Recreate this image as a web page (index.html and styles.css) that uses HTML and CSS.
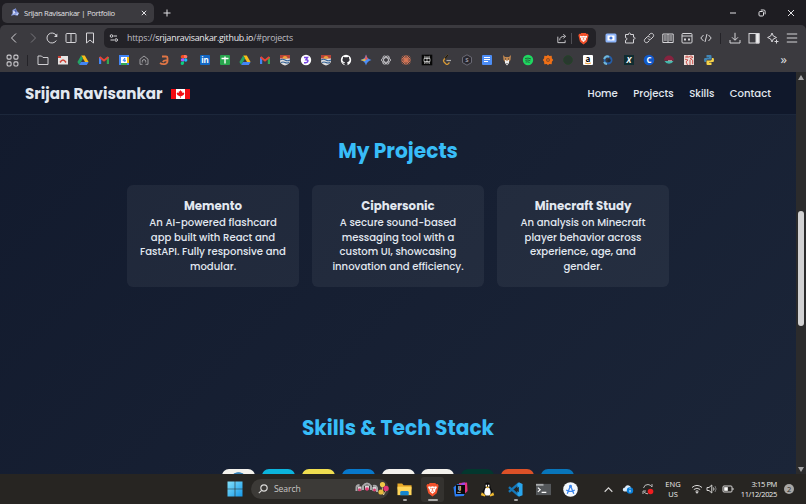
FILE: index.html
```html
<!DOCTYPE html>
<html lang="en">

<head>
  <title>Srijan Ravisankar | Portfolio</title>
  <meta charset="UTF-8">
  <meta name="viewport" content="width=device-width, initial-scale=1.0">
  <link rel="stylesheet" href="styles.css">
</head>

<body>
  <!-- icons used more than once -->
  <svg class="defs">
    <symbol id="drive" viewBox="0 0 12 12">
      <path fill="#f9bd18" d="M4.2 1.5h3.6L11.6 8H8z" />
      <path fill="#24a464" d="M4.2 1.5 6 4.6 2.2 11 .4 8z" />
      <path fill="#4285f4" d="M4 8h7.6l-1.8 3H2.2z" />
    </symbol>
    <symbol id="gmail" viewBox="0 0 12 12">
      <path fill="#4285f4" d="M1 3h2.2v7H1z" />
      <path fill="#34a853" d="M8.8 3H11v7H8.8z" />
      <path fill="none" stroke="#e94335" stroke-width="2" d="M1.6 3 6 6.5 10.4 3" />
    </symbol>
    <symbol id="ubc" viewBox="0 0 12 12">
      <path fill="#ddd" d="M1 1h10v6c0 2-2 3.5-5 4.5C3 10.5 1 9 1 7z" />
      <path fill="#b74438" d="M1 1h10v3.5H1z" />
      <path fill="#eda33b" d="M3.5 4.5a2.5 2.5 0 0 1 5 0z" />
      <path fill="none" stroke="#315f94" stroke-width="1.2" d="M1 6q2.5-1.5 5 0t5 0M2 8.5q2-1 4 0t4 0" />
    </symbol>
    <symbol id="brave" viewBox="0 0 14 16">
      <path fill="#f2502a" d="M4 1h6l1 1.3 1.5-.2L13.5 4 13 6l-1.5 6L7 15.5 2.5 12 1 6 .5 4l1-1.9 1.5.2z" />
      <path fill="#fff" d="m3 4.500 2.200.6L7 4.500l1.800.6 2.200-.6.7 1.300-1.800 2.600.2 1.500L7 12.500 3.900 9.900l.2-1.500-1.800-2.600z" />
      <path fill="none" stroke="#f2502a" stroke-width=".8" d="m4.500 6.500 1.500.6M9.500 6.500 8 7.100M7 6.500v2.500M5.500 10 7 9.500l1.500.5" />
    </symbol>
  </svg>

  <div class="tabbar">
    <div class="tab">
      <svg class="favicon" viewBox="0 0 12 12">
        <path fill="#8da0df" d="m3 3 4-2 1 3 3 3-2 3-4-1-4 1 2-3z" />
        <path fill="#e7ebff" d="m4 4 3 1-3 3zM7 8l3-1-1 2z" />
        <path fill="#4d5fb4" d="m7 2 1 3-1 1-2-2z" />
      </svg>
      <span class="tab-title">Srijan Ravisankar | Portfolio</span>
      <svg class="close" viewBox="0 0 6 6"><path d="m.8.8 4.400 4.400m0-4.400L.8 5.200" /></svg>
    </div>
    <svg class="plus" viewBox="0 0 8 8"><path d="M4 .5v7M.5 4h7" /></svg>
    <div class="window-buttons">
      <svg viewBox="0 0 8 8"><path d="M1 4h6" /></svg>
      <svg viewBox="0 0 8 8"><rect x="1" y="2.5" width="4.5" height="4.5" rx="1" /><path d="M2.800 1h3a1.300 1.300 0 0 1 1.300 1.300v3" /></svg>
      <svg viewBox="0 0 8 8"><path d="m1 1 6 6m0-6L1 7" /></svg>
    </div>
  </div>

  <div class="toolbar">
    <div class="nav-buttons">
      <svg viewBox="0 0 12 12"><path d="M8 1.500 3.500 6 8 10.500" /></svg>
      <svg class="dim" viewBox="0 0 12 12"><path d="M4 1.500 8.500 6 4 10.500" /></svg>
      <svg viewBox="0 0 12 12"><path d="M10.300 8.500a5 5 0 1 1 0-5" /><path fill="#d5d4d8" d="M11.300 1.500v3.500H8z" stroke="none" /></svg>
      <svg viewBox="0 0 12 12"><rect x="1" y="1.5" width="10" height="9" rx="1" /><path d="M6 1.500v9" /></svg>
      <svg viewBox="0 0 12 12"><path d="M2.500 1h7v10L6 8 2.500 11z" /></svg>
    </div>
    <div class="address">
      <svg class="site" viewBox="0 0 10 10"><circle cx="2.5" cy="3" r="1.3" /><path d="M4.500 3H8M1.500 7H5" /><circle cx="7.2" cy="7" r="1.3" /></svg>
      <span class="url">https://<b>srijanravisankar.github.io</b>/#projects</span>
      <svg class="share" viewBox="0 0 12 12"><path d="M2 4v6.500h8V8M4 8c0-3 2-4.500 5.500-4.500M8 1.500l2.500 2L8 6" /></svg>
      <i class="line"></i>
      <svg class="shield"><use href="#brave" /></svg>
    </div>
    <div class="extensions">
      <svg viewBox="0 0 12 12"><rect x=".5" y="1.5" width="11" height="9" rx="1.5" fill="#8eb5fa" stroke="none" /><rect x="2.5" y="3.5" width="7" height="5" fill="#fff" stroke="none" /><circle cx="6" cy="6" r="1.6" fill="#3f74d8" stroke="none" /></svg>
      <svg viewBox="0 0 12 12"><path d="M1.500 2.500h3c-.4-2 2.400-2 2 0h3v2.700c2-.4 2 2.400 0 2V11h-8V8.300c1.800.2 1.800-3 0-2.600z" /></svg>
      <svg viewBox="0 0 12 12"><path d="m5.500 3.500 1.500-1.500c2-2 5 1 3 3L8 7C7 8 5.500 7.700 5 6.500M6.500 8.500 5 10c-2 2-5-1-3-3l2-2c1-1 2.500-.7 3 .5" /></svg>
      <svg viewBox="0 0 12 12"><path d="M6 2v9M6 2H.8v8.500H6M6 2h5.200v8.500H6M2 4h2.800M2 6h2.800M2 8h2.800M7.200 4H10M7.200 6H10M7.200 8H10" /></svg>
      <svg viewBox="0 0 12 12"><rect x="1" y="1.5" width="10" height="9.5" rx="1" /><path d="M1 4h10" /><path stroke-width="2" d="M3 7.500h2m2 0h2" /></svg>
      <svg viewBox="0 0 12 12"><path d="M3.500 3 .8 6l2.700 3M8.500 3l2.700 3-2.700 3M7 2 5 10" /></svg>
    </div>
    <i class="line dark"></i>
    <div class="extensions tools">
      <svg viewBox="0 0 12 12"><path d="M6 .8V8M3 5.300 6 8.300l3-3M1 8v3h10V8" /></svg>
      <svg viewBox="0 0 12 12"><rect x="1" y="1.5" width="10" height="9.5" /><path fill="#eee" d="M8 1.500h3V11H8z" /></svg>
      <svg viewBox="0 0 12 12"><path d="m5 1 1.300 3L9.500 5.500 6.300 7 5 10 3.700 7 .6 5.500 3.700 4z M9.500 7.500v4M7.500 9.500h4" /></svg>
      <svg viewBox="0 0 12 12"><path d="M.8 2h10.400M.8 6h10.400M.8 10h10.400" /></svg>
    </div>
  </div>

  <div class="bookmarks">
    <svg class="apps" viewBox="0 0 12 12"><rect x="1" y="1" width="3.7" height="3.7" rx="1" /><rect x="7.3" y="1" width="3.7" height="3.7" rx="1" /><rect x="1" y="7.3" width="3.7" height="3.7" rx="1" /><rect x="7.3" y="7.3" width="3.7" height="3.7" rx="1" /></svg>
    <i class="line dark"></i>
    <div class="marks">
      <svg viewBox="0 0 12 12"><path fill="none" stroke="#cfced2" d="M1 2h3.500L6 3.500h5v7H1z" /></svg>
      <svg viewBox="0 0 12 12"><path fill="#e6e3e2" d="M1 2h10v8.500H1z" /><path fill="#ce4238" d="M1 2h3v2H1z" /><path fill="none" stroke="#ce4238" stroke-width="1.5" d="M3 8.500q3-5 6 0" /></svg>
      <svg><use href="#drive" /></svg>
      <svg><use href="#gmail" /></svg>
      <svg viewBox="0 0 12 12"><path fill="#4285f4" d="M1 1h10v10H1z" /><path fill="#fbbc04" d="M9 3h2v6H9z" /><path fill="#34a853" d="M3 9h6v2H3z" /><path fill="#fff" d="M3 3h6v6H3z" /><path stroke="#4285f4" fill="none" d="M6.800 8V4L5 6.700h3" /></svg>
      <svg viewBox="0 0 12 12"><path fill="none" stroke="#a9a8ac" stroke-width=".9" d="M4.500 10.300H2V5.200L6 2l4 3.200v5.100H7.500M4.300 8.500V7.300a1.700 1.700 0 0 1 3.400 0v1.200" /></svg>
      <svg viewBox="0 0 12 12"><path fill="none" stroke="#df7545" stroke-width="1.8" d="M4 2.500h4q1.500 0 1.500 1.500v3C9.500 10.500 4.500 11 2 9M9 6.500Q6 6 4.800 8" /></svg>
      <svg viewBox="0 0 12 12"><path fill="#f24e1e" d="M6 1v3.300H4.400A1.600 1.600 0 0 1 4.400 1z" /><path fill="#ff7262" d="M6 1h1.700a1.600 1.600 0 0 1 0 3.300H6z" /><path fill="#a259ff" d="M6 4.300v3.300H4.400a1.600 1.600 0 0 1 0-3.300z" /><circle cx="7.7" cy="6" r="1.7" fill="#1abcfe" /><path fill="#0acf83" d="M6 7.600v2a1.700 1.700 0 1 1-1.600-2z" /></svg>
      <svg class="text-icon" viewBox="0 0 12 12"><rect x="1" y="1" width="10" height="10" rx="1" fill="#1267c4" /><text x="6" y="9" fill="#fff">in</text></svg>
      <svg viewBox="0 0 12 12"><rect x="1" y="1" width="10" height="10" rx="1" fill="#28a64d" /><path stroke="#fff" stroke-width="1.4" d="M2.500 4.500h7M6 2.500v7" /></svg>
      <svg><use href="#drive" /></svg>
      <svg><use href="#gmail" /></svg>
      <svg><use href="#ubc" /></svg>
      <svg viewBox="0 0 12 12"><circle cx="6" cy="6" r="5.2" fill="#fff" /><path fill="none" stroke="#7544e1" stroke-width="1.5" d="M4 3.500h3.500L6 5.700c3 0 2.200 3-.2 3H4" /></svg>
      <svg><use href="#ubc" /></svg>
      <svg viewBox="0 0 12 12"><circle cx="6" cy="6" r="5.2" fill="#fff" /><path fill="#333238" d="M4.500 11.500V9.700C3.300 9.800 2.900 9 2.400 8.500c1 0 1 .8 2.200.5l.4-.8C2 7.800 2.200 5 3 4.200V2.700l1.700.6h2.600L9 2.700v1.500c.9 1 1 3.600-2 4l.5.900v2.400z" /></svg>
      <svg viewBox="0 0 12 12"><path fill="#4c8df6" d="M6 .5Q7 5 11.500 6 7 7 6 11.500 5 7 .5 6 5 5 6 .5" /><path fill="#ee5951" d="M6 .5Q6.800 4 8 5L6 6 4.500 5Q5.700 4 6 .5" /><path fill="#e9bd39" d="M.5 6 4.500 5 6 6 4.500 7.200z" /></svg>
      <svg viewBox="0 0 12 12"><g fill="none" stroke="#c4c3c7" stroke-width=".9"><ellipse cx="6" cy="6" rx="4.5" ry="2.3" /><ellipse cx="6" cy="6" rx="4.5" ry="2.3" transform="rotate(60 6 6)" /><ellipse cx="6" cy="6" rx="4.5" ry="2.3" transform="rotate(120 6 6)" /></g></svg>
      <svg viewBox="0 0 12 12"><path stroke="#d97757" d="M6 1v10M1 6h10M2.400 2.400l7.200 7.200m0-7.200L2.400 9.600M4 1.500l4 9M8 1.500l-4 9M1.500 4l9 4M1.500 8l9-4" /></svg>
      <svg viewBox="0 0 12 12"><path fill="#070707" d="M.7.7h10.600v10.600H.7z" /><path fill="none" stroke="#ddd" stroke-width=".7" d="M6 2v8M3 4.500h6v3H3zM3.700 2.300 6 4.500l2.300-2.200v2.200M3.700 2.300v2.200M3.700 9.700 6 7.200l2.300 2.500V7.500M3.700 9.700V7.500" /></svg>
      <svg viewBox="0 0 12 12"><path fill="none" stroke="#d89a36" stroke-width="1.3" d="M7 1 3 5.500c-.8 1-.8 1.700 0 2.500l2 2q1 .8 2 0l1.500-1.500" /><path stroke="#161616" stroke-width="1.3" d="M7 1 4 4.500" /><path stroke="#aaa" stroke-width="1.2" d="M5.500 6.500H10" /></svg>
      <svg class="text-icon" viewBox="0 0 12 12"><path fill="#29282f" stroke="#7b7a86" stroke-width=".8" d="m6 .8 4.500 2.600v5.200L6 11.200 1.500 8.600V3.400z" /><text class="small" x="6" y="8" fill="#9998a4">S</text></svg>
      <svg viewBox="0 0 12 12"><rect x="1" y="1" width="10" height="10" rx="1" fill="#4c8df6" /><path stroke="#fff" d="M3 3.500h6M3 5.500h6M3 7.500h4" /></svg>
      <svg viewBox="0 0 12 12"><path fill="#bf8650" d="m2 1 2 2h4l2-2-.5 5L8 8H4L2.500 6z" /><path fill="#eee" d="M4 5.500 6 7l2-1.500V9l-2 2.500L4 9z" /><path stroke="#393433" d="M4 5h1m2 0h1M5.500 9.500h1" /></svg>
      <svg viewBox="0 0 12 12"><circle cx="6" cy="6" r="5.2" fill="#1ed760" /><path fill="none" stroke="#25653d" d="M3 4.500q3-1 6 .4M3.300 6.300q2.700-.8 5 .4M3.600 8q2-.6 4 .4" /></svg>
      <svg viewBox="0 0 12 12"><path fill="#ef7017" d="m6 .8 1.200 1.300L9.700 1.800l.2 2.400L11.200 6 9.900 7.800l-.2 2.400-2.500-.3L6 11.200 4.800 9.900l-2.500.3-.2-2.400L.8 6l1.300-1.800.2-2.400 2.500.3z" /><circle cx="6" cy="6" r="1.6" fill="#c8641f" stroke="#8a4a22" stroke-width=".8" /></svg>
      <svg viewBox="0 0 12 12"><circle cx="6" cy="6" r="4.3" fill="#29382f" stroke="#244428" /></svg>
      <svg class="text-icon" viewBox="0 0 12 12"><rect x="1" y="1" width="10" height="10" rx="1" fill="#fff" /><text x="6" y="8.3">a</text><path fill="none" stroke="#f39b32" d="M3 9q3 1.500 6 0" /></svg>
      <svg viewBox="0 0 12 12"><circle cx="6" cy="6" r="3.5" fill="none" stroke="#245eaa" stroke-width="2" /><path fill="none" stroke="#70b7d9" stroke-width="2" d="M2 5q2-4 5-2M2 8q1 2 3 2" /><circle cx="7" cy="6.5" r="1.6" fill="#222d39" /></svg>
      <svg class="text-icon" viewBox="0 0 12 12"><path fill="#112d31" d="M1 1h10v10H1z" /><text x="6" y="9" fill="#fff" font-style="italic">X</text></svg>
      <svg class="text-icon" viewBox="0 0 12 12"><circle cx="6" cy="6" r="5.3" fill="#1259ca" /><text x="6" y="9" fill="#fff">C</text></svg>
      <svg viewBox="0 0 12 12"><path fill="#86233f" d="M1 6.500a5 5 0 0 1 10 0z" /><path fill="#43b7ab" d="M1.500 7h9a5 5 0 0 1-9 0" /><path stroke="#e8d5d2" stroke-width=".7" d="M5 6.700h4" /></svg>
      <svg viewBox="0 0 12 12"><path fill="#eadedb" d="M1 1h10v10H1z" /><path fill="none" stroke="#ca433d" stroke-width=".9" d="M2 3h4l2-1.200 2 1.500-3 1.200 2.700 1.700v4M2 5.200l3 .8-2 1.800L4.500 11M7 6v5M4 1.500v2" /></svg>
      <svg viewBox="0 0 12 12"><path fill="#4186b6" d="M3.500 1h4q1 0 1 1v3.500h-4Q3 5.500 3 8H1.500Q.3 5.500 1.500 4H6v-.6H3.500z" /><path fill="#f7d348" d="M8.500 11h-4q-1 0-1-1V6.500h4Q9 6.500 9 4h1.500q1.200 2.500 0 4H6v.6h2.500z" /></svg>
    </div>
    <span class="more">»</span>
  </div>

  <div class="viewport">
    <div class="page">
      <header>
        <h1>Srijan Ravisankar</h1>
        <svg class="flag" viewBox="0 0 19 10"><path fill="#fff" d="M0 0h19v10H0z" /><path fill="#f20c13" d="M0 0h5v10H0zM14 0h5v10h-5zM9.500 1l.9 1.500.9-.3-.3 1.700 1.300-.7.4.9.7.2-.8 1.700-2.300 1.300h-.5V9h-.6V7.300h-.5L6.400 6l-.8-1.700.7-.2.4-.9 1.300.7-.3-1.700.9.3z" /></svg>
        <nav>
          <a>Home</a>
          <a>Projects</a>
          <a>Skills</a>
          <a>Contact</a>
        </nav>
      </header>
      <section class="projects">
        <h2>My Projects</h2>
        <div class="cards">
          <div class="card">
            <h3>Memento</h3>
            <p>An AI-powered flashcard<br>app built with React and<br>FastAPI. Fully responsive and<br>modular.</p>
          </div>
          <div class="card">
            <h3>Ciphersonic</h3>
            <p>A secure sound-based<br>messaging tool with a<br>custom UI, showcasing<br>innovation and efficiency.</p>
          </div>
          <div class="card">
            <h3>Minecraft Study</h3>
            <p>An analysis on Minecraft<br>player behavior across<br>experience, age, and<br>gender.</p>
          </div>
        </div>
      </section>
      <section class="skills">
        <h2>Skills &amp; Tech Stack</h2>
        <div class="stack">
          <div class="tile white java"></div>
          <div class="tile cyan"></div>
          <div class="tile yellow"></div>
          <div class="tile blue"></div>
          <div class="tile white"></div>
          <div class="tile white"></div>
          <div class="tile green"></div>
          <div class="tile orange"></div>
          <div class="tile sky"></div>
        </div>
      </section>
    </div>
    <div class="scrollbar">
      <i class="up"></i>
      <i class="thumb"></i>
      <i class="down"></i>
    </div>
  </div>

  <div class="taskbar">
    <svg class="windows" viewBox="0 0 16 16"><defs><linearGradient id="win" x2="1" y2="1"><stop stop-color="#83e1fb" /><stop offset="1" stop-color="#1598e8" /></linearGradient></defs><path fill="url(#win)" d="M.5.5h7.200v7.200H.5zM8.300.5h7.200v7.200H8.300zM.5 8.300h7.200v7.200H.5zM8.300 8.300h7.200v7.200H8.300z" /></svg>
    <div class="search">
      <svg class="glass" viewBox="0 0 10 10"><circle cx="6" cy="4" r="3.2" /><path d="M3.700 6.300.8 9.200" /></svg>
      <span>Search</span>
      <svg class="party" viewBox="0 0 34 16">
        <path fill="none" stroke="#a8a8aa" stroke-width="2" d="M1.500 10V6.500q0-2.500 3-2.500M8 9V5q4-5 8 0v4M18 5q3-1 4 2v4" />
        <path fill="#d8d5d7" d="M3 5.500h3.500v4H3zM10 4.500h4v4h-4zM17.500 6H21v4h-3.500z" />
        <circle cx="4.5" cy="8.7" r="1.5" fill="#d83c6f" /><circle cx="12" cy="8" r="1.8" fill="#e83b76" /><circle cx="19.5" cy="9" r="1.5" fill="#d83c6f" />
        <path stroke="#f2dea5" stroke-width=".8" d="m27 5 1.500 9L31 9" />
        <circle cx="27.5" cy="3.5" r="2.6" fill="#efc848" /><circle cx="31" cy="7.5" r="2.7" fill="#e33674" /><circle cx="26" cy="11" r="2.6" fill="#e7ba3e" />
      </svg>
    </div>
    <div class="pinned">
      <div class="app open"><svg viewBox="0 0 16 16"><path fill="#e9a927" d="M.5 1.500h5l1.500 2h8.500V8H.5z" /><path fill="#ffd65a" d="M.5 5h15v9H.5z" /><path fill="#1686cf" d="M3.500 14v-3q0-1.500 1.500-1.500h6q1.500 0 1.500 1.500v3z" /></svg></div>
      <div class="app open current"><svg viewBox="0 0 14 16"><use href="#brave" /></svg></div>
      <div class="app"><svg class="text-icon" viewBox="0 0 16 16"><path fill="#e8317c" d="M6.500 1 15 .5l.5 9L13 12 6 4z" /><path fill="#9a4be8" d="m10 .8 3-.2-1 4-5-1z" /><path fill="#2a7df3" d="M.5 5.500 5 2l3 1v9l5-1-1.500 4-9.500.5z" /><path fill="#090909" d="M3.200 3.200h9.600v9.600H3.200z" /><text x="7" y="8.5" fill="#fff">IJ</text><path stroke="#fff" stroke-width=".8" d="M4.700 11h3.500" /></svg></div>
      <div class="app"><svg viewBox="0 0 16 16"><path fill="#0d0d0e" d="M5 4q0-3.500 3-3.500T11 4q0 2 2 5t-1 5H4q-3-2-1-5t2-5" /><path fill="#fff" d="M6 6h4q3 7-.5 8.500h-3Q3 12 6 6M6 3h1.500v2H6zM8.500 3H10v2H8.500z" /><path fill="#f0ba30" d="M6 5h4L8 7zM2 11l4 3-1 1.500L.8 14zM14 11l-4 3 1 1.500 4.200-1.500z" /></svg></div>
      <div class="app open"><svg viewBox="0 0 16 16"><path fill="none" stroke="#1678b9" stroke-width="2.5" d="m1 10.500 10.500-9M1 5.500l10.500 9" /><path fill="#29a6ee" d="m11.500.3 4 1.700v12l-4 1.700-1.500-2V2.500z" /><path fill="#272522" d="M11.500 5v6L7.700 8z" /></svg></div>
      <div class="app"><svg viewBox="0 0 16 16"><path fill="#54575a" d="M0 2h16v12H0z" /><path fill="#a9abad" d="M0 2h8v2H0z" /><path fill="none" stroke="#fff" stroke-width="1.2" d="m2 6 2.500 2.200L2 10.500M6 11h5" /></svg></div>
      <div class="app"><svg viewBox="0 0 16 16"><circle cx="8" cy="8" r="7.8" fill="#f4f8fd" /><path fill="none" stroke="#3985ee" stroke-width="1.4" d="M8 4 4.500 12.500M8 4l3.500 8.500M3.500 8.500q4.500 3 9 0" /><circle cx="8" cy="4.5" r="1.5" fill="#3985ee" /></svg></div>
    </div>
    <div class="tray">
      <svg class="caret" viewBox="0 0 8 8"><path d="M.6 6 4 2.500 7.400 6" /></svg>
      <svg class="cloud" viewBox="0 0 12 12"><path fill="#d9eafa" d="M2.500 8.500C0 8 .5 4.500 3 4.500 4 1 8.500 2 9 5l-3 3.500z" /><circle cx="8" cy="7.5" r="3.2" fill="#087fd9" /><path stroke="#fff" stroke-width=".9" d="M8 7v2.300M8 5.300v.8" /></svg>
      <svg class="sync" viewBox="0 0 12 12"><path fill="none" stroke="#bbb" d="M1.500 5q1-3.700 4.500-3.500 2.500.2 4 2.500V1M1 11V8h3M2 9q2 2 4 1.800" /><circle cx="8.5" cy="8.5" r="2.8" fill="#f01e20" /></svg>
      <div class="lang">ENG<br>US</div>
      <svg class="wifi" viewBox="0 0 12 12"><path d="M1 4.500q5-4.200 10 0M2.800 6.500q3.200-2.600 6.400 0M4.500 8.300q1.500-1 3 0" /><circle cx="6" cy="9.5" r=".7" fill="#eee" /></svg>
      <svg class="sound" viewBox="0 0 12 12"><path d="M1 4.500h2L5.800 2v8L3 7.500H1zM7.500 4.500q1 1.500 0 3" /><path stroke="#777" d="M9 3q2.200 3 0 6" /></svg>
      <svg class="battery" viewBox="0 0 12 12"><rect x="1" y="3" width="9" height="6" rx="1" /><path fill="#fff" d="M2.500 4.500h3v3h-3zM11 5v2" /></svg>
      <div class="clock">3:15 PM<br>11/12/2025</div>
      <span class="count">2</span>
    </div>
  </div>
</body>

</html>
```

FILE: styles.css
```css
* {
  box-sizing: border-box;
}

body {
  margin: 0;
  width: 806px;
  height: 504px;
  overflow: hidden;
  background-color: #1e1d22;
  font-family: "Open Sans", "Noto Sans", sans-serif;
  color: #e0e0e3;
}

svg {
  display: block;
  flex: none;
}

.defs {
  display: none;
}

.text-icon text {
  font-family: "Open Sans", sans-serif;
  font-size: 8px;
  font-weight: 700;
  text-anchor: middle;
}

.text-icon .small {
  font-size: 6px;
}

/* browser */
.tabbar {
  display: flex;
  align-items: center;
  height: 25px;
  padding-left: 2px;
}

.tab {
  display: flex;
  align-items: center;
  width: 152px;
  height: 20px;
  padding: 0 7px 0 8px;
  border-radius: 5px;
  background-color: #3b3a3f;
}

.favicon {
  width: 10px;
  height: 11px;
}

.tab-title {
  margin-left: 4px;
  font-size: 7.7px;
  letter-spacing: -.32px;
  white-space: nowrap;
}

.close {
  width: 6px;
  margin-left: auto;
}

.plus {
  width: 8px;
  margin-left: 9px;
}

.close,
.plus,
.window-buttons svg {
  fill: none;
  stroke: #e0e0e3;
}

.window-buttons {
  display: flex;
  gap: 21px;
  margin: 0 11px 0 auto;
}

.window-buttons svg {
  width: 8px;
}

.toolbar {
  display: flex;
  align-items: center;
  height: 26px;
  padding-left: 8px;
  border-radius: 5px 5px 0 0;
  background-color: #3b3a3f;
}

.toolbar svg {
  fill: none;
  stroke: #d5d4d8;
}

.nav-buttons,
.extensions {
  display: flex;
  gap: 7px;
}

.tools {
  margin-left: -1px;
}

.nav-buttons svg,
.extensions svg {
  width: 12px;
  height: 12px;
}

.nav-buttons .dim {
  stroke: #77767b;
}

.address {
  display: flex;
  align-items: center;
  width: 492px;
  height: 20px;
  margin-left: 8px;
  padding: 0 7px 0 5px;
  border-radius: 5px;
  background-color: #232227;
}

.site {
  width: 10px;
}

.url {
  margin-left: 8px;
  font-size: 8.8px;
  letter-spacing: -.22px;
  color: #bcbbc0;
  white-space: nowrap;
}

.url b {
  font-weight: 400;
  color: #ecebee;
}

.share {
  width: 11px;
  margin-left: auto;
}

.address .line {
  margin: 0 6px 0 4px;
}

.toolbar .shield {
  width: 11px;
  height: 13px;
  stroke: none;
}

.line {
  width: 1px;
  height: 11px;
  background-color: #515056;
}

.line.dark {
  background-color: #242328;
}

.address + .extensions {
  margin-left: 9px;
}

.toolbar > .line {
  margin: 0 9px 0 8px;
}

.bookmarks {
  display: flex;
  align-items: center;
  height: 21px;
  padding: 0 0 3px 6px;
  background-color: #3b3a3f;
}

.apps {
  width: 13px;
  fill: none;
  stroke: #cfced2;
}

.bookmarks .line {
  margin-left: 8px;
}

.marks {
  display: grid;
  grid-template-columns: repeat(34, 20.2px);
  justify-items: center;
  margin-left: 5px;
}

.marks svg {
  width: 12px;
  height: 12px;
}

.more {
  margin: -2px 19px 0 auto;
  font-size: 13px;
  line-height: 16px;
}

/* portfolio */
.viewport {
  display: flex;
  height: 402px;
}

.page {
  width: 796px;
  overflow: hidden;
  background: linear-gradient(135deg, #121a2d, #1b2538);
  font-family: Poppins, Inter, sans-serif;
  color: #e2e8f0;
}

header {
  display: flex;
  align-items: center;
  height: 43px;
  padding: 1px 25px 0;
  border-bottom: 1px solid #1c273b;
  background-color: #10182b;
}

h1 {
  margin: 0;
  font-size: 15.15px;
  font-weight: 700;
  white-space: nowrap;
}

.flag {
  width: 19px;
  height: 10px;
  margin-left: 8px;
}

nav {
  display: flex;
  gap: 15.5px;
  margin-left: auto;
  padding-top: 1px;
  font-size: 10.1px;
  font-weight: 500;
}

.projects {
  height: 277px;
  padding-top: 21px;
}

h2 {
  margin: 0;
  font-size: 20.2px;
  line-height: 30px;
  font-weight: 700;
  text-align: center;
  color: #38bdf8;
}

.cards {
  display: flex;
  justify-content: center;
  gap: 13px;
  margin-top: 19px;
}

.card {
  width: 172px;
  height: 102px;
  padding-top: 13px;
  border-radius: 6px;
  background-color: rgba(255, 255, 255, .055);
  text-align: center;
}

h3 {
  margin: 0;
  font-size: 11.8px;
  line-height: 17px;
  font-weight: 700;
}

p {
  margin: 1px 0 0;
  font-size: 10.1px;
  line-height: 14.7px;
  font-weight: 500;
  white-space: nowrap;
}

.skills {
  padding-top: 21px;
}

.stack {
  display: flex;
  justify-content: center;
  gap: 6.8px;
  margin-top: 25.5px;
}

.tile {
  width: 33px;
  height: 33px;
  border-radius: 7px;
}

.white {
  background-color: #f3f1ec;
}

.java {
  background-image: radial-gradient(ellipse 6px 3px at 50% 6px, #3680b4 80%, transparent);
}

.cyan {
  background-color: #0cb4dc;
}

.yellow {
  background-color: #f0de50;
}

.blue {
  background-color: #0878ca;
}

.green {
  background-color: #03372e;
}

.orange {
  background-color: #dc5127;
}

.sky {
  background-color: #0875ba;
}

.scrollbar {
  display: flex;
  flex-direction: column;
  align-items: center;
  width: 10px;
  padding: 3px 0 2px;
  background-color: #2b2b2c;
}

.up,
.down {
  border: 3px solid transparent;
}

.up {
  border-top: 0;
  border-bottom: 5px solid #a2a2a3;
}

.down {
  margin-top: auto;
  border-top: 5px solid #a2a2a3;
  border-bottom: 0;
}

.thumb {
  width: 6px;
  height: 115px;
  margin-top: 131px;
  border-radius: 3px;
  background-color: #d1d1d2;
}

/* windows taskbar */
.taskbar {
  display: flex;
  align-items: center;
  height: 30px;
  padding-left: 227px;
  background-color: #272522;
}

.windows {
  width: 16px;
}

.search {
  display: flex;
  align-items: center;
  width: 138px;
  height: 20px;
  margin-left: 8px;
  padding: 0 0 0 7px;
  border-radius: 10px;
  background-color: #3c3a37;
  font-size: 8.6px;
  letter-spacing: -.1px;
  color: #c9c8c6;
}

.glass {
  width: 10px;
  margin-right: 6px;
  fill: none;
  stroke: #d9d8d7;
  stroke-width: 1.2;
}

.party {
  width: 34px;
  height: 16px;
  margin-left: auto;
}

.pinned {
  display: flex;
  gap: 4px;
  margin-left: 4px;
}

.app {
  display: flex;
  align-items: center;
  justify-content: center;
  position: relative;
  width: 23.7px;
  height: 25px;
  border-radius: 3px;
}

.app svg {
  width: 15px;
  height: 15px;
}

.app .text-icon text {
  font-size: 5px;
}

.open::after {
  content: "";
  position: absolute;
  bottom: 1px;
  width: 4px;
  height: 2px;
  border-radius: 1px;
  background-color: #aaa9a7;
}

.current {
  background-color: #34322f;
}

.current::after {
  width: 10px;
}

.tray {
  display: flex;
  align-items: center;
  margin: 0 12px 0 auto;
  font-size: 7.5px;
  line-height: 10px;
  letter-spacing: -.35px;
  color: #ededec;
}

.caret,
.wifi,
.sound,
.battery {
  fill: none;
  stroke: #d7d6d5;
}

.caret {
  width: 9px;
}

.cloud {
  width: 12px;
  margin-left: 9px;
}

.sync {
  width: 12px;
  margin-left: 8px;
}

.lang {
  width: 18px;
  margin: 0 9px 0 10px;
  letter-spacing: 0;
  text-align: center;
}

.wifi {
  width: 12px;
}

.sound {
  width: 12px;
  margin-left: 3px;
}

.battery {
  width: 12px;
  margin-left: 4px;
}

.clock {
  width: 43px;
  text-align: right;
}

.count {
  width: 10px;
  height: 10px;
  margin-left: 7px;
  border-radius: 50%;
  background-color: #a8a7a5;
  color: #2b2a28;
  text-align: center;
}
```
